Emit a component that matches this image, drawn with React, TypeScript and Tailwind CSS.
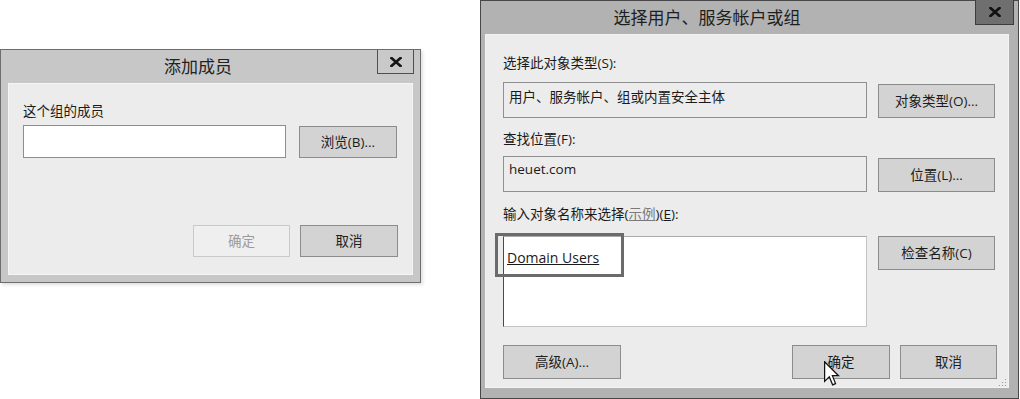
import React from 'react';

const font = { fontFamily: '"Open Sans", "Noto Sans CJK SC", sans-serif' };

// Windows 8 style push button
const Btn: React.FC<{ label: React.ReactNode; w: string; disabled?: boolean; className?: string }> = ({ label, w, disabled, className = '' }) => (
  <div
    className={`${w} h-[32px] flex items-center justify-center text-[13.5px] border ${
      disabled ? 'bg-[#efefef] border-[#c9c9c9] text-[#9c9c9c]' : 'bg-[#d3d3d3] border-[#8c8c8c] text-[#1c1c1c]'
    } ${className}`}
  >
    {label}
  </div>
);

const CloseX: React.FC<{ dark?: boolean }> = ({ dark }) => (
  <svg width="12" height="10" viewBox="0 0 12 10">
    <path d="M1.5 1 L10.5 9 M10.5 1 L1.5 9" stroke={dark ? '#111' : '#151515'} strokeWidth="2.6" strokeLinecap="square" />
  </svg>
);

const AddMemberDialog: React.FC = () => (
  <div className="absolute left-0 top-[49px] w-[421px] h-[234px] flex flex-col bg-[#c7c7c7] border border-[#6e6e6e] shadow-[2px_2px_3px_rgba(0,0,0,0.12)]">
    {/* Title bar */}
    <div className="h-[33px] flex items-start shrink-0">
      <div className="flex-1 h-full flex items-center justify-center pl-[18px] text-[17px] text-[#222]">添加成员</div>
      <div className="w-[37px] h-[24px] mr-[6px] border-x border-b border-[#4f4f4f] bg-[#c9c9c9] flex items-center justify-center">
        <CloseX />
      </div>
    </div>

    {/* Body */}
    <div className="flex-1 mx-[7px] mb-[7px] bg-[#ececec] border border-[#f5f5f5] flex flex-col pl-[14px] pr-[14px] pb-[17px]">
      <div className="mt-[18px] h-[18px] leading-[18px] text-[13.5px] text-[#1a1a1a]">这个组的成员</div>
      <div className="mt-[5px] flex items-start">
        <div className="w-[263px] h-[33px] bg-white border border-[#8e8e8e]" />
        <Btn label="浏览(B)..." w="w-[98px]" className="ml-[13px] mt-[1px]" />
      </div>
      <div className="mt-auto flex justify-end gap-[10px]">
        <Btn label="确定" w="w-[97px]" disabled />
        <Btn label="取消" w="w-[98px]" />
      </div>
    </div>
  </div>
);

const SelectUsersDialog: React.FC = () => (
  <div className="absolute left-[480px] top-0 w-[539px] h-[399px] flex flex-col bg-[#b2b2b2] border border-[#474747]">
    {/* Title bar */}
    <div className="h-[33px] flex items-start shrink-0">
      <div className="flex-1 h-full flex items-center justify-center pr-[42px] text-[17px] text-[#1e1e1e]">选择用户、服务帐户或组</div>
      <div className="w-[39px] h-[25px] mr-[4px] -mt-px border-x border-b border-[#3d3d3d] bg-[#6f6f6f] flex items-center justify-center">
        <CloseX dark />
      </div>
    </div>

    {/* Body */}
    <div className="flex-1 ml-[4px] mr-[9px] mb-[10px] bg-[#ececec] border border-[#f3f3f3] flex flex-col pl-[17px] pr-[11px] pb-[8px] relative">
      <div className="mt-[19px] h-[18px] leading-[18px] text-[13.5px] text-[#1a1a1a]">选择此对象类型(S):</div>
      <div className="mt-[10px] flex items-end">
        <div className="w-[364px] h-[36px] border border-[#8f8f8f] pl-[5px] pt-[5px] text-[13.5px] leading-[18px] text-[#1a1a1a]">
          用户、服务帐户、组或内置安全主体
        </div>
        <Btn label="对象类型(O)..." w="w-[117px]" className="ml-[11px] h-[34px]" />
      </div>

      <div className="mt-[12px] h-[18px] leading-[18px] text-[13.5px] text-[#1a1a1a]">查找位置(F):</div>
      <div className="mt-[8px] flex items-end">
        <div className="w-[364px] h-[36px] border border-[#8f8f8f] pl-[5px] pt-[3px] text-[13.5px] leading-[18px] text-[#1a1a1a]">
          heuet.com
        </div>
        <Btn label="位置(L)..." w="w-[117px]" className="ml-[11px] h-[34px]" />
      </div>

      <div className="mt-[13px] h-[18px] leading-[18px] text-[13.5px] text-[#1a1a1a]">
        输入对象名称来选择(<span className="underline text-[#7a7a7a]">示例</span>)(<span className="underline">E</span>):
      </div>
      <div className="mt-[13px] flex items-start">
        <div className="relative w-[364px] h-[91px] bg-white border border-[#c4c4c4] border-t-[#a9a9a9] border-l-[#4a4a4a] pl-[3px] pt-[8px]">
          <span className="text-[14px] leading-[18px] underline text-[#1a1a1a]">Domain Users</span>
          {/* highlight frame around the entered name */}
          <div className="absolute left-[-9px] top-[-4px] w-[129px] h-[44px] border-[3px] border-[#6b6b6b]" />
        </div>
        <Btn label="检查名称(C)" w="w-[117px]" className="ml-[11px] h-[34px]" />
      </div>

      <div className="mt-auto flex items-center">
        <Btn label="高级(A)..." w="w-[118px]" className="h-[34px]" />
        <div className="flex-1" />
        <Btn label="确定" w="w-[98px]" className="h-[34px]" />
        <Btn label="取消" w="w-[97px]" className="h-[34px] ml-[10px]" />
      </div>

      {/* size grip */}
      <svg className="absolute right-[1px] bottom-[1px]" width="8" height="8" viewBox="0 0 8 8">
        <rect x="6" y="1" width="1" height="1" fill="#9a9a9a" />
        <rect x="3" y="4" width="1" height="1" fill="#9a9a9a" />
        <rect x="6" y="4" width="1" height="1" fill="#9a9a9a" />
        <rect x="0" y="7" width="1" height="1" fill="#9a9a9a" />
        <rect x="3" y="7" width="1" height="1" fill="#9a9a9a" />
        <rect x="6" y="7" width="1" height="1" fill="#9a9a9a" />
      </svg>
    </div>
  </div>
);

export default function App() {
  return (
    <div className="relative w-[1020px] h-[399px] bg-white overflow-hidden" style={font}>
      <AddMemberDialog />
      <SelectUsersDialog />
      {/* mouse pointer */}
      <svg className="absolute left-[824px] top-[361px]" width="16" height="26" viewBox="0 0 13 21">
        <path d="M0.5 0.5 L0.5 16.5 L4.3 12.8 L7 19.3 L9.4 18.3 L6.8 11.9 L11.8 11.9 Z" fill="#fff" stroke="#111" strokeWidth="1" strokeLinejoin="miter" />
      </svg>
    </div>
  );
}
